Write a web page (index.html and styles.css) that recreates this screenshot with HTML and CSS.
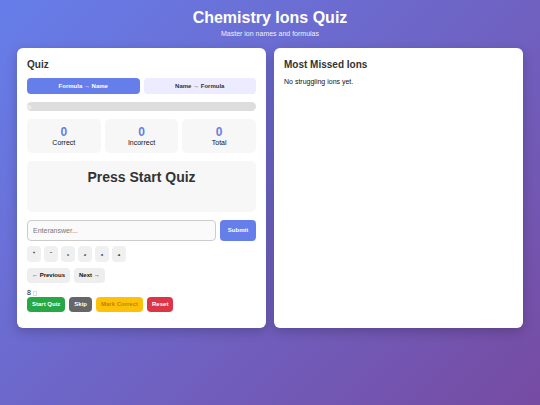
FILE: index.html
```html
<!DOCTYPE html>
<html lang="en">
<head>
<meta charset="utf-8">
<meta name="viewport" content="width=device-width, initial-scale=1">
<title>Chemistry Ions Quiz</title>
<link rel="stylesheet" href="styles.css">
</head>
<body>
<header class="header">
  <h1>Chemistry Ions Quiz</h1>
  <p>Master ion names and formulas</p>
</header>
<main class="layout">
  <section class="card">
    <h2>Quiz</h2>
    <div class="modes">
      <button class="mode active" type="button">Formula → Name</button>
      <button class="mode" type="button">Name → Formula</button>
    </div>
    <div class="progress"><div class="fill">0%</div></div>
    <div class="stats">
      <div class="stat"><strong>0</strong><span>Correct</span></div>
      <div class="stat"><strong>0</strong><span>Incorrect</span></div>
      <div class="stat"><strong>0</strong><span>Total</span></div>
    </div>
    <div class="question">Press Start Quiz</div>
    <form class="answer">
      <input type="text" aria-label="Answer" placeholder="Enteranswer...">
      <button class="submit" type="button">Submit</button>
    </form>
    <div class="keys">
      <button type="button">⁺</button>
      <button type="button">⁻</button>
      <button type="button">₁</button>
      <button type="button">₂</button>
      <button type="button">₃</button>
      <button type="button">₄</button>
    </div>
    <div class="nav">
      <button type="button">← Previous</button>
      <button type="button">Next →</button>
    </div>
    <div class="streak">8 <span class="box"></span></div>
    <div class="actions">
      <button class="start" type="button">Start Quiz</button>
      <button class="skip" type="button">Skip</button>
      <button class="mark" type="button" disabled>Mark Correct</button>
      <button class="reset" type="button">Reset</button>
    </div>
  </section>
  <section class="card">
    <h2>Most Missed Ions</h2>
    <p class="empty">No struggling ions yet.</p>
  </section>
</main>
</body>
</html>
```
FILE: styles.css
```css
* { box-sizing: border-box; }
body {
  margin: 0;
  padding: 8px 17px;
  min-height: 100vh;
  font-family: "Liberation Sans", Arial, sans-serif;
  font-size: 7px;
  line-height: 8px;
  color: #111;
  background: linear-gradient(135deg, #667eea, #764ba2);
}
h1, h2, p { margin: 0; }
.header { text-align: center; color: #fff; margin-bottom: 10px; }
.header h1 { font-size: 16px; line-height: 20px; margin-bottom: 2px; }
.header p { opacity: 0.9; }
.layout { display: grid; grid-template-columns: 1fr 1fr; gap: 8px; max-width: 600px; margin: 0 auto; }
.card {
  background: #fff;
  border-radius: 6px;
  padding: 10px 10px 16px;
  box-shadow: 0 4px 12px rgba(0, 0, 0, 0.2);
}
.card h2 { font-size: 10px; line-height: 13px; color: #333; margin-bottom: 7px; }
button {
  font-family: inherit;
  font-size: 6px;
  line-height: 7px;
  font-weight: bold;
  border: 0;
  border-radius: 4px;
  padding: 4px 5px;
  color: #111;
  background: #eee;
}
.modes { display: flex; gap: 4px; margin-bottom: 8px; }
.mode { flex: 1; height: 16px; background: #ecebff; color: #333; }
.mode.active { background: #667eea; color: #fff; }
.progress { height: 9px; border-radius: 5px; background: #ddd; overflow: hidden; margin-bottom: 8px; }
.fill { width: 0; height: 100%; display: flex; align-items: center; justify-content: center; color: #fff; font-size: 6px; }
.stats { display: grid; grid-template-columns: repeat(3, 1fr); gap: 4px; margin-bottom: 8px; }
.stat { background: #f7f7f7; border-radius: 5px; padding: 6px; height: 34px; text-align: center; }
.stat strong { display: block; font-size: 12px; line-height: 14px; color: #667eea; }
.stat span { display: block; }
.question {
  background: #f7f7f7;
  border-radius: 5px;
  min-height: 51px;
  padding: 8px;
  margin-bottom: 8px;
  text-align: center;
  font-size: 14px;
  line-height: 16px;
  font-weight: bold;
  color: #333;
}
.answer { display: flex; gap: 4px; margin-bottom: 5px; }
.answer input {
  flex: 1;
  min-width: 0;
  height: 21px;
  padding: 0 5px;
  border: 1px solid #ccc;
  border-radius: 4px;
  background: #fafafa;
  font-family: inherit;
  font-size: 7px;
}
.answer input::placeholder { color: #777; }
.submit { width: 36px; background: #667eea; color: #fff; }
.keys { display: flex; gap: 3px; margin-bottom: 6px; }
.keys button { width: 14px; height: 16px; padding: 0; background: #f0f0f0; }
.nav { display: flex; gap: 4px; margin-bottom: 6px; }
.streak { display: flex; align-items: center; gap: 2px; }
.box { width: 4px; height: 5px; border: 1px solid #ddd; }
.actions { display: flex; gap: 4px; }
.actions button { color: #fff; }
.actions .start { background: #28a745; }
.actions .skip { background: #666; }
.actions .mark { background: #ffc107; color: #b8860b; }
.actions .reset { background: #dc3545; }
```
